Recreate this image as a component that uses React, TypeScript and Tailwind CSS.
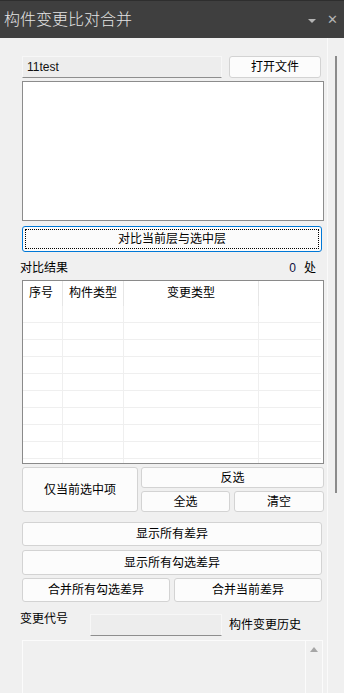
import React from 'react';

const font = { fontFamily: '"Liberation Sans", "Noto Sans CJK SC", sans-serif' };

function Btn({ label, className = '' }: { label: string; className?: string }) {
    return (
        <div
            className={`flex items-center justify-center rounded-[3px] border border-[#d3d3d3] bg-[#fcfcfc] text-[12px] text-black ${className}`}
        >
            {label}
        </div>
    );
}

export default function App() {
    const rows = Array.from({ length: 10 });

    return (
        <div className="relative h-[693px] w-[344px] overflow-hidden bg-[#f0f0f0]" style={font}>
            {/* 标题栏 */}
            <div className="flex h-[38px] items-center border-t border-[#2e2e2e] bg-[#3f3f3f] pl-[4px] pr-[6px]">
                <span className="text-[16px] font-light leading-none text-[#e4e4e4]">构件变更比对合并</span>
                <span className="ml-auto mt-[3px] h-0 w-0 border-x-[4px] border-t-[4px] border-x-transparent border-t-[#b4b4b4]" />
                <span className="ml-[11px] text-[13px] leading-none text-[#b4b4b4]">✕</span>
            </div>

            <div className="flex h-[655px]">
                {/* 主内容 */}
                <div className="w-[327px] pl-[20px]">
                    {/* 文件行 */}
                    <div className="mt-[18px] flex h-[22px] pl-[2px]">
                        <div className="flex w-[200px] items-center border border-b-[#8e8e8e] border-l-[#f7f7f7] border-r-[#f7f7f7] border-t-[#f7f7f7] bg-[#ededed] pl-[4px] text-[12px] text-[#111]">
                            11test
                        </div>
                        <Btn label="打开文件" className="ml-[7px] w-[92px]" />
                    </div>

                    {/* 图层列表 */}
                    <div className="ml-[2px] mt-[3px] h-[140px] w-[302px] border border-[#8c8c8c] bg-white" />

                    {/* 对比按钮 */}
                    <div className="ml-[2px] mt-[5px] h-[26px] w-[300px] rounded-[3px] border border-[#0078d7] bg-[#fbfbfb] p-[2px]">
                        <div className="flex h-full w-full items-center justify-center border border-dotted border-black text-[12px]">
                            对比当前层与选中层
                        </div>
                    </div>

                    {/* 对比结果 */}
                    <div className="mt-[4px] flex h-[24px] items-center pr-[11px] text-[12px]">
                        <span>对比结果</span>
                        <span className="ml-auto text-[12px] text-[#101040]">0</span>
                        <span className="ml-[8px]">处</span>
                    </div>

                    {/* 结果表格 */}
                    <div className="ml-[2px] h-[184px] w-[302px] overflow-hidden border border-[#8a8a8a] bg-white text-[12px]">
                        <div className="grid h-[25px] grid-cols-[40px_61px_135px_1fr] items-center">
                            <div className="h-full border-r border-[#e6e6e6] pl-[6px] leading-[25px]">序号</div>
                            <div className="h-full border-r border-[#e6e6e6] pl-[6px] leading-[25px]">构件类型</div>
                            <div className="h-full border-r border-[#e6e6e6] text-center leading-[25px]">变更类型</div>
                            <div />
                        </div>
                        {rows.map((_, i) => (
                            <div key={i} className="grid h-[17px] grid-cols-[40px_61px_135px_1fr]">
                                <div className="border-b border-r border-[#efefef]" />
                                <div className="border-b border-r border-[#efefef]" />
                                <div className="border-b border-r border-[#efefef]" />
                                <div className="mr-[2px] border-b border-[#efefef]" />
                            </div>
                        ))}
                    </div>

                    {/* 选择按钮 */}
                    <div className="ml-[2px] mt-[3px] flex h-[45px] gap-[3px]">
                        <Btn label="仅当前选中项" className="h-full w-[116px]" />
                        <div className="flex w-[183px] flex-col gap-[3px]">
                            <Btn label="反选" className="h-[21px]" />
                            <div className="flex h-[21px] gap-[4px]">
                                <Btn label="全选" className="w-[89px]" />
                                <Btn label="清空" className="flex-1" />
                            </div>
                        </div>
                    </div>

                    <Btn label="显示所有差异" className="ml-[2px] mt-[10px] h-[24px] w-[300px]" />
                    <Btn label="显示所有勾选差异" className="ml-[2px] mt-[4px] h-[25px] w-[300px]" />
                    <div className="ml-[2px] mt-[3px] flex h-[24px] w-[300px] gap-[4px]">
                        <Btn label="合并所有勾选差异" className="flex-1" />
                        <Btn label="合并当前差异" className="flex-1" />
                    </div>

                    {/* 变更代号 */}
                    <div className="relative mt-[10px] flex h-[26px] text-[12px]">
                        <span className="leading-[14px]">变更代号</span>
                        <div className="ml-[22px] mt-[2px] h-[22px] w-[132px] border border-b-[#8e8e8e] border-l-[#f7f7f7] border-r-[#f7f7f7] border-t-[#f7f7f7] bg-[#ededed]" />
                        <span className="ml-[7px] mt-[6px] leading-[14px]">构件变更历史</span>
                    </div>

                    {/* 历史记录 */}
                    <div className="ml-[2px] mt-[2px] flex h-[80px] w-[301px] border border-[#fbfbfb] bg-[#f0f0f0]">
                        <div className="flex-1" />
                        <div className="w-[17px] border-l border-[#fbfbfb] pt-[6px]">
                            <div className="ml-[4px] h-0 w-0 border-x-[4px] border-b-[5px] border-x-transparent border-b-[#a6a6a6]" />
                        </div>
                    </div>
                </div>

                {/* 右侧滚动条 */}
                <div className="w-[1px] bg-[#fafafa]" />
                <div className="flex-1 pl-[7px] pt-[18px]">
                    <div className="h-[437px] w-[2px] bg-[#8b8b8b]" />
                </div>
            </div>
        </div>
    );
}
